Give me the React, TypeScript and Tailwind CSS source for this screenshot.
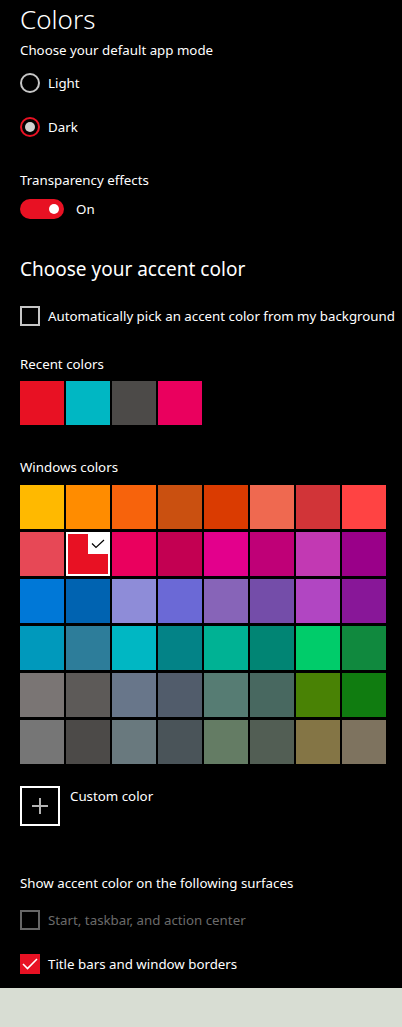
import React from "react";

const windowsColors: string[] = [
  "#FFB900", "#FF8C00", "#F7630C", "#CA5010", "#DA3B01", "#EF6950", "#D13438", "#FF4343",
  "#E74856", "#E81123", "#EA005E", "#C30052", "#E3008C", "#BF0077", "#C239B3", "#9A0089",
  "#0078D7", "#0063B1", "#8E8CD8", "#6B69D6", "#8764B8", "#744DA9", "#B146C2", "#881798",
  "#0099BC", "#2D7D9A", "#00B7C3", "#038387", "#00B294", "#018574", "#00CC6A", "#10893E",
  "#7A7574", "#5D5A58", "#68768A", "#515C6B", "#567C73", "#486860", "#498205", "#107C10",
  "#767676", "#4C4A48", "#69797E", "#4A5459", "#647C64", "#525E54", "#847545", "#7E735F",
];

const recentColors: string[] = ["#E81123", "#00B7C3", "#4C4A48", "#EA005E"];

function Swatch({ color, selected }: { color: string; selected?: boolean }) {
  if (selected) {
    return (
      <div className="relative w-[44px] h-[44px] border-2 border-white" style={{ backgroundColor: color }}>
        <div className="absolute top-0 right-0 w-[20px] h-[20px] bg-white flex items-center justify-center">
          <svg width="14" height="10" viewBox="0 0 14 10">
            <path d="M1 4.5 L5 8.5 L13 1" fill="none" stroke="#000" strokeWidth="1.2" />
          </svg>
        </div>
      </div>
    );
  }
  return <div className="w-[44px] h-[44px]" style={{ backgroundColor: color }} />;
}

export default function App() {
  return (
    <div
      className="w-[402px] h-[1027px] bg-black text-white flex flex-col overflow-hidden"
      style={{ fontFamily: '"Noto Sans", "Open Sans", sans-serif' }}
    >
      <div className="px-5 flex flex-col">
        <div className="h-[38px] flex items-center text-[26px] font-light">Colors</div>
        <div className="h-6 pt-[2px] flex items-center text-[13.3px]">Choose your default app mode</div>

        <div className="mt-px h-10 flex items-center gap-2 text-[13.3px]">
          <div className="w-5 h-5 rounded-full border-2 border-[#c6c6c6]" />
          <span className="pt-[2px]">Light</span>
        </div>
        <div className="mt-1 h-10 flex items-center gap-2 text-[13.3px]">
          <div className="w-5 h-5 rounded-full border-2 border-[#e81123] flex items-center justify-center">
            <div className="w-[10px] h-[10px] rounded-full bg-[#d0d0d0]" />
          </div>
          <span className="pt-[2px]">Dark</span>
        </div>

        <div className="mt-[21px] h-6 pt-[2px] flex items-center text-[13.3px]">Transparency effects</div>
        <div className="mt-1 h-[26px] flex items-center gap-3 text-[13.3px]">
          <div className="w-[44px] h-[20px] rounded-full bg-[#e81123] flex items-center justify-end pr-[5px]">
            <div className="w-[10px] h-[10px] rounded-full bg-white" />
          </div>
          <span className="pt-[2px]">On</span>
        </div>

        <div className="mt-8 h-[30px] flex items-center text-[19px]">Choose your accent color</div>

        <div className="mt-5 h-6 flex items-center gap-2 text-[13.3px]">
          <div className="w-5 h-5 border-2 border-[#c6c6c6] shrink-0" />
          <span className="pt-[2px] whitespace-nowrap">Automatically pick an accent color from my background</span>
        </div>

        <div className="mt-6 h-6 pt-[2px] flex items-center text-[13.3px]">Recent colors</div>
        <div className="mt-[5px] flex gap-[2px]">
          {recentColors.map((c, i) => (
            <Swatch key={i} color={c} />
          ))}
        </div>

        <div className="mt-[30px] h-6 pt-[2px] flex items-center text-[13.3px]">Windows colors</div>
        <div className="mt-[6px] grid grid-cols-[repeat(8,44px)] gap-x-[2px] gap-y-[3px]">
          {windowsColors.map((c, i) => (
            <Swatch key={i} color={c} selected={i === 9} />
          ))}
        </div>

        <div className="mt-[22px] flex items-start gap-[10px]">
          <div className="w-10 h-10 border-2 border-white flex items-center justify-center">
            <svg width="18" height="18" viewBox="0 0 18 18">
              <path d="M9 1 V17 M1 9 H17" stroke="#b4b4b4" strokeWidth="2" />
            </svg>
          </div>
          <div className="h-5 pt-[2px] flex items-center text-[13.3px]">Custom color</div>
        </div>

        <div className="mt-[45px] h-6 pt-[2px] flex items-center text-[13.3px]">Show accent color on the following surfaces</div>

        <div className="mt-[15px] h-5 flex items-center gap-2 text-[13.3px] text-[#6b6b6b]">
          <div className="w-5 h-5 border-2 border-[#666666]" />
          <span className="pt-[2px]">Start, taskbar, and action center</span>
        </div>

        <div className="mt-6 h-5 flex items-center gap-2 text-[13.3px]">
          <div className="w-5 h-5 bg-[#e81123] flex items-center justify-center">
            <svg width="16" height="12" viewBox="0 0 16 12">
              <path d="M1 6 L5.5 10.5 L15 1" fill="none" stroke="#fff" strokeWidth="1.6" />
            </svg>
          </div>
          <span className="pt-[2px]">Title bars and window borders</span>
        </div>
      </div>
      <div className="mt-[14px] flex-1 bg-[#d8ddd3]" />
    </div>
  );
}
